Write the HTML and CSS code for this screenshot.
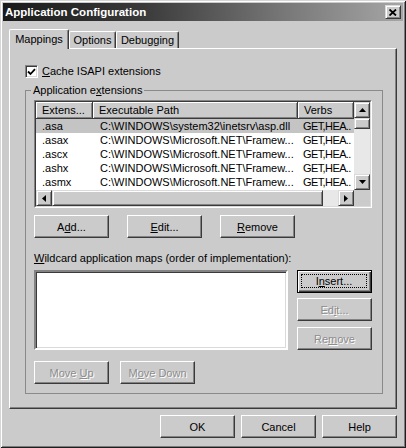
FILE: index.html
```html
<!DOCTYPE html>
<html>
<head>
<meta charset="utf-8">
<link rel="stylesheet" href="styles.css">
</head>
<body>
<div class="window">
  <div class="titlebar">
    <span class="title">Application Configuration</span>
    <span class="close raised"><svg width="8" height="7" viewBox="0 0 8 7"><path d="M0.5 0.5 L7 6.5 M7 0.5 L0.5 6.5" stroke="#000" stroke-width="1.8" fill="none"/></svg></span>
  </div>
  <div class="client">
    <div class="tabs">
      <div class="tab active">Mappings</div>
      <div class="tab t-options">Options</div>
      <div class="tab t-debug">Debugging</div>
    </div>
    <div class="panel">
      <div class="check">
        <span class="box"><svg width="9" height="8" viewBox="0 0 9 8"><polyline points="1,3.5 3.5,6 8,1.2" stroke="#000" stroke-width="1.8" fill="none"/></svg></span>
        <span><u>C</u>ache ISAPI extensions</span>
      </div>
      <fieldset class="group">
        <legend>Application e<u>x</u>tensions</legend>
        <div class="listview">
          <div class="lv-inner">
            <div class="lv-top">
              <div class="lv-content">
                <div class="lv-header">
                  <div class="hcell c1">Extens...</div>
                  <div class="hcell c2">Executable Path</div>
                  <div class="hcell c3">Verbs</div>
                </div>
                <div class="row sel"><span class="c1">.asa</span><span class="c2">C:\WINDOWS\system32\inetsrv\asp.dll</span><span class="c3">GET,HEA..</span></div>
                <div class="row"><span class="c1">.asax</span><span class="c2">C:\WINDOWS\Microsoft.NET\Framew...</span><span class="c3">GET,HEA..</span></div>
                <div class="row"><span class="c1">.ascx</span><span class="c2">C:\WINDOWS\Microsoft.NET\Framew...</span><span class="c3">GET,HEA..</span></div>
                <div class="row"><span class="c1">.ashx</span><span class="c2">C:\WINDOWS\Microsoft.NET\Framew...</span><span class="c3">GET,HEA..</span></div>
                <div class="row"><span class="c1">.asmx</span><span class="c2">C:\WINDOWS\Microsoft.NET\Framew...</span><span class="c3">GET,HEA..</span></div>
              </div>
              <div class="vscroll">
                <div class="sb-btn raised"><svg width="7" height="4" viewBox="0 0 7 4"><polygon points="3.5,0 7,4 0,4" fill="#000"/></svg></div>
                <div class="thumb-v raised"></div>
                <div class="track"></div>
                <div class="sb-btn raised"><svg width="7" height="4" viewBox="0 0 7 4"><polygon points="0,0 7,0 3.5,4" fill="#000"/></svg></div>
              </div>
            </div>
            <div class="hscroll">
              <div class="sb-btn raised"><svg width="4" height="7" viewBox="0 0 4 7"><polygon points="4,0 4,7 0,3.5" fill="#000"/></svg></div>
              <div class="thumb-h raised"></div>
              <div class="track"></div>
              <div class="sb-btn raised"><svg width="4" height="7" viewBox="0 0 4 7"><polygon points="0,0 4,3.5 0,7" fill="#000"/></svg></div>
              <div class="corner"></div>
            </div>
          </div>
        </div>
        <div class="btnrow">
          <button class="btn"><span>A<u>d</u>d...</span></button>
          <button class="btn"><span><u>E</u>dit...</span></button>
          <button class="btn"><span><u>R</u>emove</span></button>
        </div>
        <div class="wlabel"><u>W</u>ildcard application maps (order of implementation):</div>
        <div class="wildrow">
          <div class="listbox"></div>
          <div class="sidebtns">
            <button class="btn default"><span class="focus"><span>I<u>n</u>sert...</span></span></button>
            <button class="btn disabled"><span>Ed<u>i</u>t...</span></button>
            <button class="btn disabled second"><span>Re<u>m</u>ove</span></button>
          </div>
        </div>
        <div class="moverow">
          <button class="btn disabled"><span>Move <u>U</u>p</span></button>
          <button class="btn disabled"><span>M<u>o</u>ve Down</span></button>
        </div>
      </fieldset>
    </div>
    <div class="footer">
      <button class="btn">OK</button>
      <button class="btn">Cancel</button>
      <button class="btn">Help</button>
    </div>
  </div>
</div>
</body>
</html>
```

FILE: styles.css
```css
* { box-sizing: border-box; }
html, body { margin: 0; padding: 0; }
body {
  font-family: "Liberation Sans", Arial, sans-serif;
  font-size: 11px;
  color: #000;
  background: #fff;
}
u { text-decoration: underline; text-underline-offset: 1px; }

.raised {
  background: #cbcbcb;
  border: 1px solid;
  border-color: #dadada #3a3a3a #3a3a3a #dadada;
  box-shadow: inset 1px 1px #fff, inset -1px -1px #838383;
}

.window {
  width: 406px;
  height: 448px;
  background: #cbcbcb;
  padding: 3px;
  box-shadow: inset 1px 1px #d6d6d6, inset -1px -1px #1e1e1e, inset 2px 2px #fff, inset -2px -2px #7c7c7c;
  display: flex;
  flex-direction: column;
}

.titlebar {
  height: 18px;
  display: flex;
  align-items: center;
  justify-content: space-between;
  padding: 0 2px 0 2px;
  background: linear-gradient(to right, #1a1a1a 0%, #3a3a3a 35%, #777 70%, #a6a6a6 100%);
}
.title { color: #fff; font-weight: bold; font-size: 11.5px; }
.close {
  width: 16px;
  height: 14px;
  display: flex;
  align-items: center;
  justify-content: center;
}

.client {
  padding: 8px 6px 0 6px;
  display: flex;
  flex-direction: column;
}

.tabs {
  display: flex;
  align-items: flex-end;
  height: 19px;
  position: relative;
  z-index: 1;
}
.tab {
  height: 17px;
  background: #cbcbcb;
  border-top: 1px solid #fff;
  border-left: 1px solid #fff;
  border-right: 1px solid #3a3a3a;
  box-shadow: inset -1px 0 #838383;
  border-radius: 2px 2px 0 0;
  padding-top: 2px;
  text-align: center;
  line-height: 13px;
}
.tab.active {
  width: 60px;
  height: 20px;
  margin-bottom: -1px;
  padding-top: 3px;
}
.t-options { width: 47px; }
.t-debug { width: 63px; }

.panel {
  width: 388px;
  height: 361px;
  border: 1px solid;
  border-color: #fff #3a3a3a #3a3a3a #fff;
  box-shadow: inset -1px -1px #838383;
  padding: 16px 0 0 15px;
}

.check {
  display: flex;
  align-items: center;
  gap: 4px;
  height: 13px;
  line-height: 13px;
}
.box {
  width: 13px;
  height: 13px;
  background: #fff;
  border: 1px solid;
  border-color: #838383 #fff #fff #838383;
  box-shadow: inset 1px 1px #3a3a3a, inset -1px -1px #dadada;
  display: flex;
  align-items: center;
  justify-content: center;
}

.group {
  margin: 6px 0 0 0;
  width: 358px;
  padding: 3px 10px 9px 8px;
  border: 1px solid #8a8a8a;
  min-inline-size: 0;
}
.group legend {
  padding: 0 2px;
  margin-left: -3px;
  line-height: 13px;
}

.listview {
  width: 338px;
  height: 108px;
  border: 1px solid;
  border-color: #838383 #fff #fff #838383;
}
.lv-inner {
  height: 100%;
  border: 1px solid;
  border-color: #3a3a3a #dadada #dadada #3a3a3a;
  background: #fff;
  display: flex;
  flex-direction: column;
}
.lv-top { display: flex; height: 88px; }
.lv-content { width: 318px; overflow: hidden; }
.lv-header { display: flex; height: 17px; }
.hcell {
  background: #cbcbcb;
  border-right: 1px solid #3a3a3a;
  border-bottom: 1px solid #3a3a3a;
  box-shadow: inset 1px 1px #fff, inset -1px -1px #838383;
  line-height: 16px;
  padding-left: 6px;
  white-space: nowrap;
}
.c1 { width: 57px; flex: none; }
.c2 { width: 205px; flex: none; }
.c3 { width: 56px; flex: none; }
.row {
  display: flex;
  height: 14px;
  line-height: 14px;
  white-space: nowrap;
}
.row span { padding-left: 6px; overflow: hidden; }
.row .c2 { padding-left: 7px; }
.row .c3 { padding-left: 5px; letter-spacing: -0.6px; }
.row.sel { background: #c4c4c4; }

.vscroll {
  width: 16px;
  display: flex;
  flex-direction: column;
}
.sb-btn {
  width: 16px;
  height: 16px;
  display: flex;
  align-items: center;
  justify-content: center;
  flex: none;
}
.thumb-v { height: 11px; flex: none; }
.track { flex: 1; background: #e8e8e8; }
.hscroll { display: flex; height: 16px; }
.thumb-h { width: 271px; flex: none; }
.corner { width: 16px; background: #cbcbcb; flex: none; }

.btn {
  appearance: none;
  width: 75px;
  height: 23px;
  margin: 0;
  padding: 0;
  font: inherit;
  color: #000;
  background: #cbcbcb;
  border: 1px solid;
  border-color: #fff #3a3a3a #3a3a3a #fff;
  box-shadow: inset -1px -1px #838383;
  display: flex;
  align-items: center;
  justify-content: center;
  flex: none;
  white-space: nowrap;
}
.btn.disabled {
  color: #8d8d8d;
  text-shadow: 1px 1px 0 #fff;
}
.btn.default {
  border: 1px solid #000;
  box-shadow: inset 1px 1px #fff, inset -1px -1px #3a3a3a, inset -2px -2px #838383;
  padding: 3px 4px 4px 3px;
}
.focus {
  flex: 1;
  align-self: stretch;
  border: 1px dotted #000;
  display: flex;
  align-items: center;
  justify-content: center;
}

.btnrow {
  display: flex;
  gap: 18px;
  margin-top: 7px;
}
.wlabel {
  margin-top: 14px;
  line-height: 13px;
  white-space: nowrap;
}
.wildrow {
  display: flex;
  gap: 9px;
  margin-top: 5px;
}
.listbox {
  width: 254px;
  height: 80px;
  background: #fff;
  border: 2px solid;
  border-color: #838383 #fff #fff #838383;
  box-shadow: inset 1px 1px #3a3a3a, inset -1px -1px #dadada;
}
.sidebtns {
  display: flex;
  flex-direction: column;
  gap: 5px;
}
.sidebtns .second { margin-top: 1px; }
.moverow {
  display: flex;
  gap: 11px;
  margin-top: 11px;
}

.footer {
  display: flex;
  justify-content: flex-end;
  gap: 6px;
  margin-top: 6px;
}
```
